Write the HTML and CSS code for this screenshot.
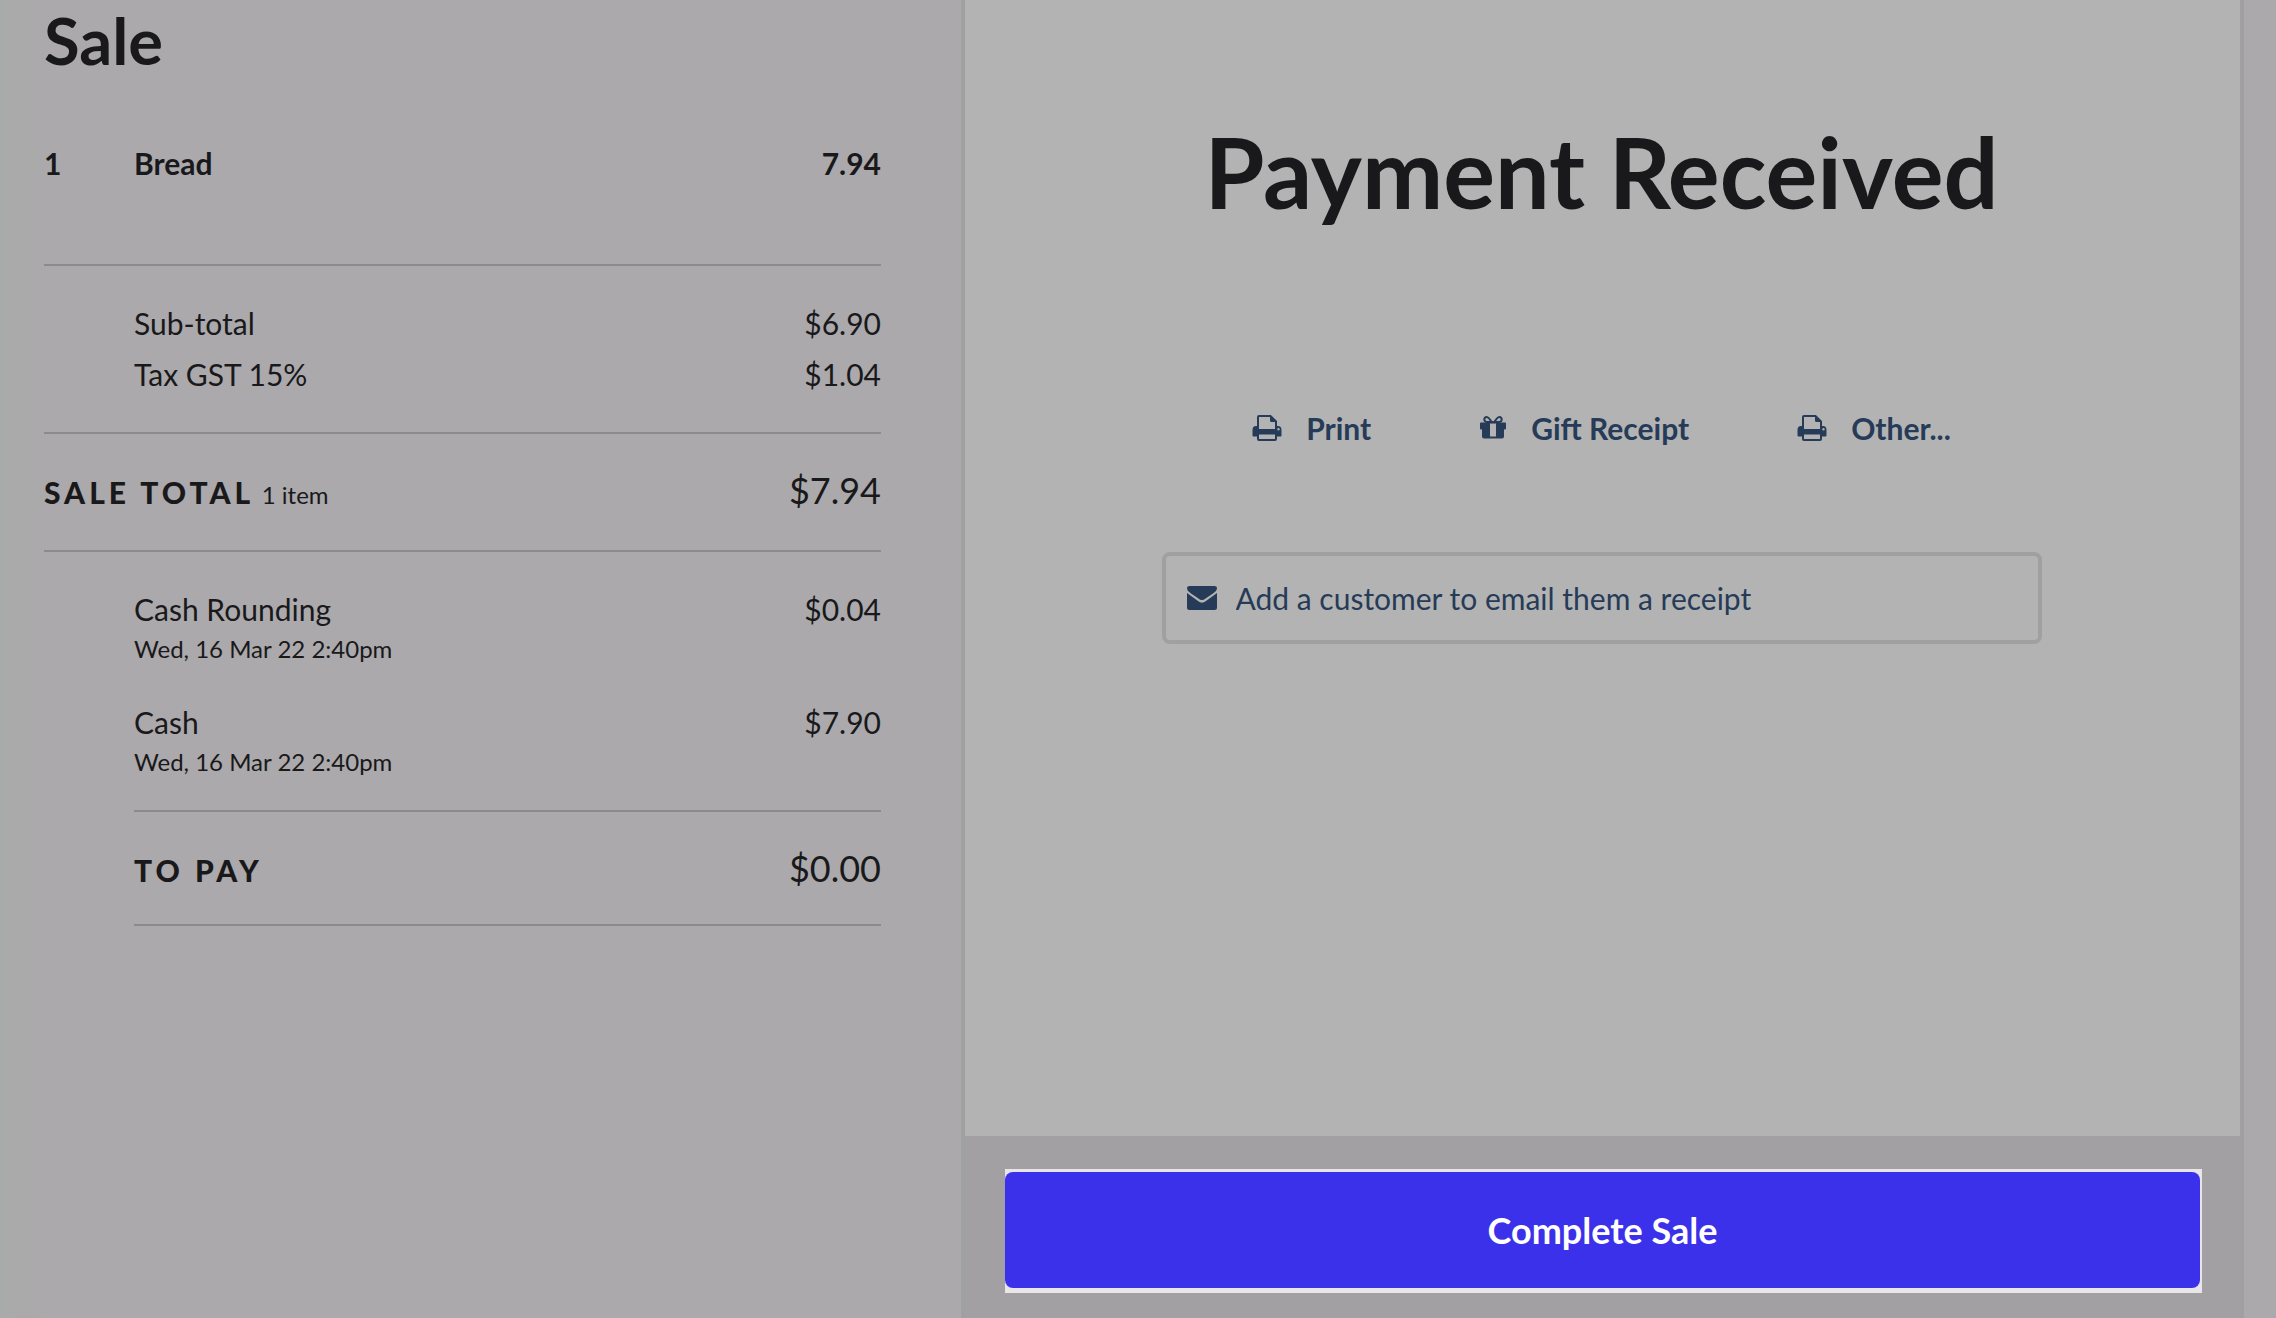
FILE: index.html
```html
<!DOCTYPE html>
<html lang="en">
<head>
<meta charset="utf-8">
<meta name="viewport" content="width=device-width, initial-scale=1">
<title>Sale – Payment Received</title>
<link rel="stylesheet" href="styles.css">
</head>
<body>
<svg class="sprite" aria-hidden="true">
  <symbol id="icon-print" viewBox="0 0 30 28">
    <path d="M6 15V3Q6 2 7 2H18.500L24 7.500V15" fill="none" stroke="currentColor" stroke-width="2"/>
    <path d="M18 2L24.500 8H19.500Q18 8 18 6.500Z" fill="currentColor"/>
    <path fill="currentColor" fill-rule="evenodd" d="M4 12H7V15H23V12H26Q29.500 12 29.500 16V21.500Q29.500 22.500 28.500 22.500H25V25Q25 27 23 27H7Q5 27 5 25V22.500H1.500Q0.500 22.500 0.500 21.500V16Q0.500 12 4 12ZM7 20.500V25H23V20.500ZM26.500 14A1.200 1.200 0 1 0 26.500 16.400A1.200 1.200 0 1 0 26.500 14Z"/>
  </symbol>
  <symbol id="icon-gift" viewBox="0 0 28 28">
    <path d="M13 9C11 5 9.500 3 7.500 3C4.500 3 4.500 8 8 8H20C23.500 8 23.500 3 20.500 3C18.500 3 17 5 15 9" fill="none" stroke="currentColor" stroke-width="2"/>
    <path fill="currentColor" fill-rule="evenodd" d="M2 8.500H26Q27 8.500 27 9.500V14.500Q27 15.500 26 15.500H25V22.500Q25 24.500 23 24.500H5Q3 24.500 3 22.500V15.500H2Q1 15.500 1 14.500V9.500Q1 8.500 2 8.500ZM11 9.500V22.500H17V9.500Z"/>
  </symbol>
  <symbol id="icon-mail" viewBox="0 0 32 28">
    <path fill="currentColor" d="M3.500 2H28.500Q31 2 31 4C31 6.500 29 8 27 9.500L19.500 14.500C17 16.500 15 16.500 12.500 14.500L5 9.500C3 8 1 6.500 1 4Q1 2 3.500 2Z"/>
    <path fill="currentColor" d="M1 9L12 17Q16 20.500 20 17L31 9V23.500Q31 26 28.500 26H3.500Q1 26 1 23.500Z"/>
  </symbol>
</svg>
<div class="layout">
  <section class="sale">
    <h1 class="sale-title">Sale</h1>
    <div class="row item">
      <span class="qty">1</span>
      <span class="label">Bread</span>
      <span>7.94</span>
    </div>
    <div class="group totals">
      <div class="row indent"><span class="label">Sub-total</span><span>$6.90</span></div>
      <div class="row indent"><span class="label">Tax GST 15%</span><span>$1.04</span></div>
    </div>
    <div class="group row sale-total">
      <span class="label"><strong class="caps">SALE TOTAL</strong> <small class="small">1 item</small></span>
      <span class="amount">$7.94</span>
    </div>
    <div class="group payments">
      <div class="payment">
        <div class="row"><span class="label">Cash Rounding</span><span>$0.04</span></div>
        <div class="small">Wed, 16 Mar 22 2:40pm</div>
      </div>
      <div class="payment">
        <div class="row"><span class="label">Cash</span><span>$7.90</span></div>
        <div class="small">Wed, 16 Mar 22 2:40pm</div>
      </div>
      <div class="row to-pay">
        <strong class="label caps">TO PAY</strong>
        <span class="amount">$0.00</span>
      </div>
    </div>
  </section>
  <main class="panel">
    <div class="panel-body">
      <h2 class="panel-title">Payment Received</h2>
      <div class="actions">
        <button class="action" type="button"><svg class="icon-print" aria-hidden="true"><use href="#icon-print"/></svg>Print</button>
        <button class="action" type="button"><svg class="icon-gift" aria-hidden="true"><use href="#icon-gift"/></svg>Gift Receipt</button>
        <button class="action" type="button"><svg class="icon-print" aria-hidden="true"><use href="#icon-print"/></svg>Other...</button>
      </div>
      <label class="email">
        <svg class="icon-mail" aria-hidden="true"><use href="#icon-mail"/></svg>
        <input class="email-input" type="text" aria-label="Customer" placeholder="Add a customer to email them a receipt">
      </label>
    </div>
    <footer class="panel-footer">
      <div class="spotlight"><button class="complete" type="button">Complete Sale</button></div>
    </footer>
  </main>
</div>
</body>
</html>
```
FILE: styles.css
```css
* { box-sizing: border-box; }

body {
  margin: 0;
  background: #aba9ab;
  color: #19191b;
  font: 30px/40px Lato, "Open Sans", sans-serif;
}

button, input {
  margin: 0;
  padding: 0;
  border: 0;
  background: none;
  color: inherit;
  font: inherit;
}

.sprite { position: absolute; width: 0; height: 0; }

.layout {
  display: grid;
  grid-template-columns: 961fr 1283fr;
  min-height: 100vh;
  padding-right: 32px;
}

.sale {
  padding: 0 80px 0 44px;
  background: linear-gradient(90deg, #a9aaaa, #aba9ab 50px);
}

.sale-title {
  margin: 0;
  font-size: 65px;
  line-height: 80px;
  font-weight: 700;
}

.row { display: flex; align-items: baseline; }
.label { flex: 1; }

.item {
  padding: 63px 0 81px;
  font-weight: 700;
}

.qty { width: 90px; }

.group { border-top: 2px solid #8b8a8c; }

.totals { padding: 32px 0; }
.indent { padding-left: 90px; }
.totals .row { line-height: 51px; }

.sale-total { padding: 32px 0 31px; line-height: 48px; }

.caps { font-weight: 900; letter-spacing: 4px; }
.small { font-size: 24px; }
.amount { font-size: 36px; }

.payments { padding: 37px 0 0 90px; }
.payment { padding-bottom: 33px; }
.payment:nth-child(2) { padding-bottom: 28px; }

.to-pay {
  padding: 32px 0 30px;
  border: solid #8b8a8c;
  border-width: 2px 0;
  line-height: 48px;
}

.panel {
  display: flex;
  flex-direction: column;
  border: solid #a09fa1;
  border-width: 0 4px;
  background: #b3b3b3;
}

.panel-body {
  flex: 1;
  display: flex;
  flex-direction: column;
  align-items: center;
  padding: 112px 42px 0 40px;
}

.panel-title {
  margin: 0;
  font-size: 97px;
  line-height: 120px;
  font-weight: 700;
}

.actions {
  display: flex;
  gap: 108px;
  padding: 176px 0 104px;
}

.action {
  display: flex;
  align-items: center;
  gap: 24px;
  color: #263b57;
  font-weight: 700;
}

.icon-print { width: 30px; height: 28px; }
.icon-gift { width: 28px; height: 28px; }
.icon-mail { width: 32px; height: 28px; }

.email {
  display: flex;
  align-items: center;
  gap: 18px;
  width: 880px;
  max-width: 100%;
  height: 92px;
  padding: 0 20px;
  border: 4px solid #a09fa1;
  border-radius: 8px;
  color: #263b57;
}

.email-input { flex: 1; min-width: 0; height: 48px; }
.email-input::placeholder { color: inherit; opacity: 1; }

.panel-footer {
  padding: 33px 38px 25px 40px;
  background: #a2a0a2;
}

.spotlight {
  padding: 3px 2px 5px 0;
  background: #e8e6ea;
}

.complete {
  display: block;
  width: 100%;
  height: 116px;
  border-radius: 8px;
  background: #3c31ea;
  color: #fff;
  font-size: 36px;
  font-weight: 700;
}
```
